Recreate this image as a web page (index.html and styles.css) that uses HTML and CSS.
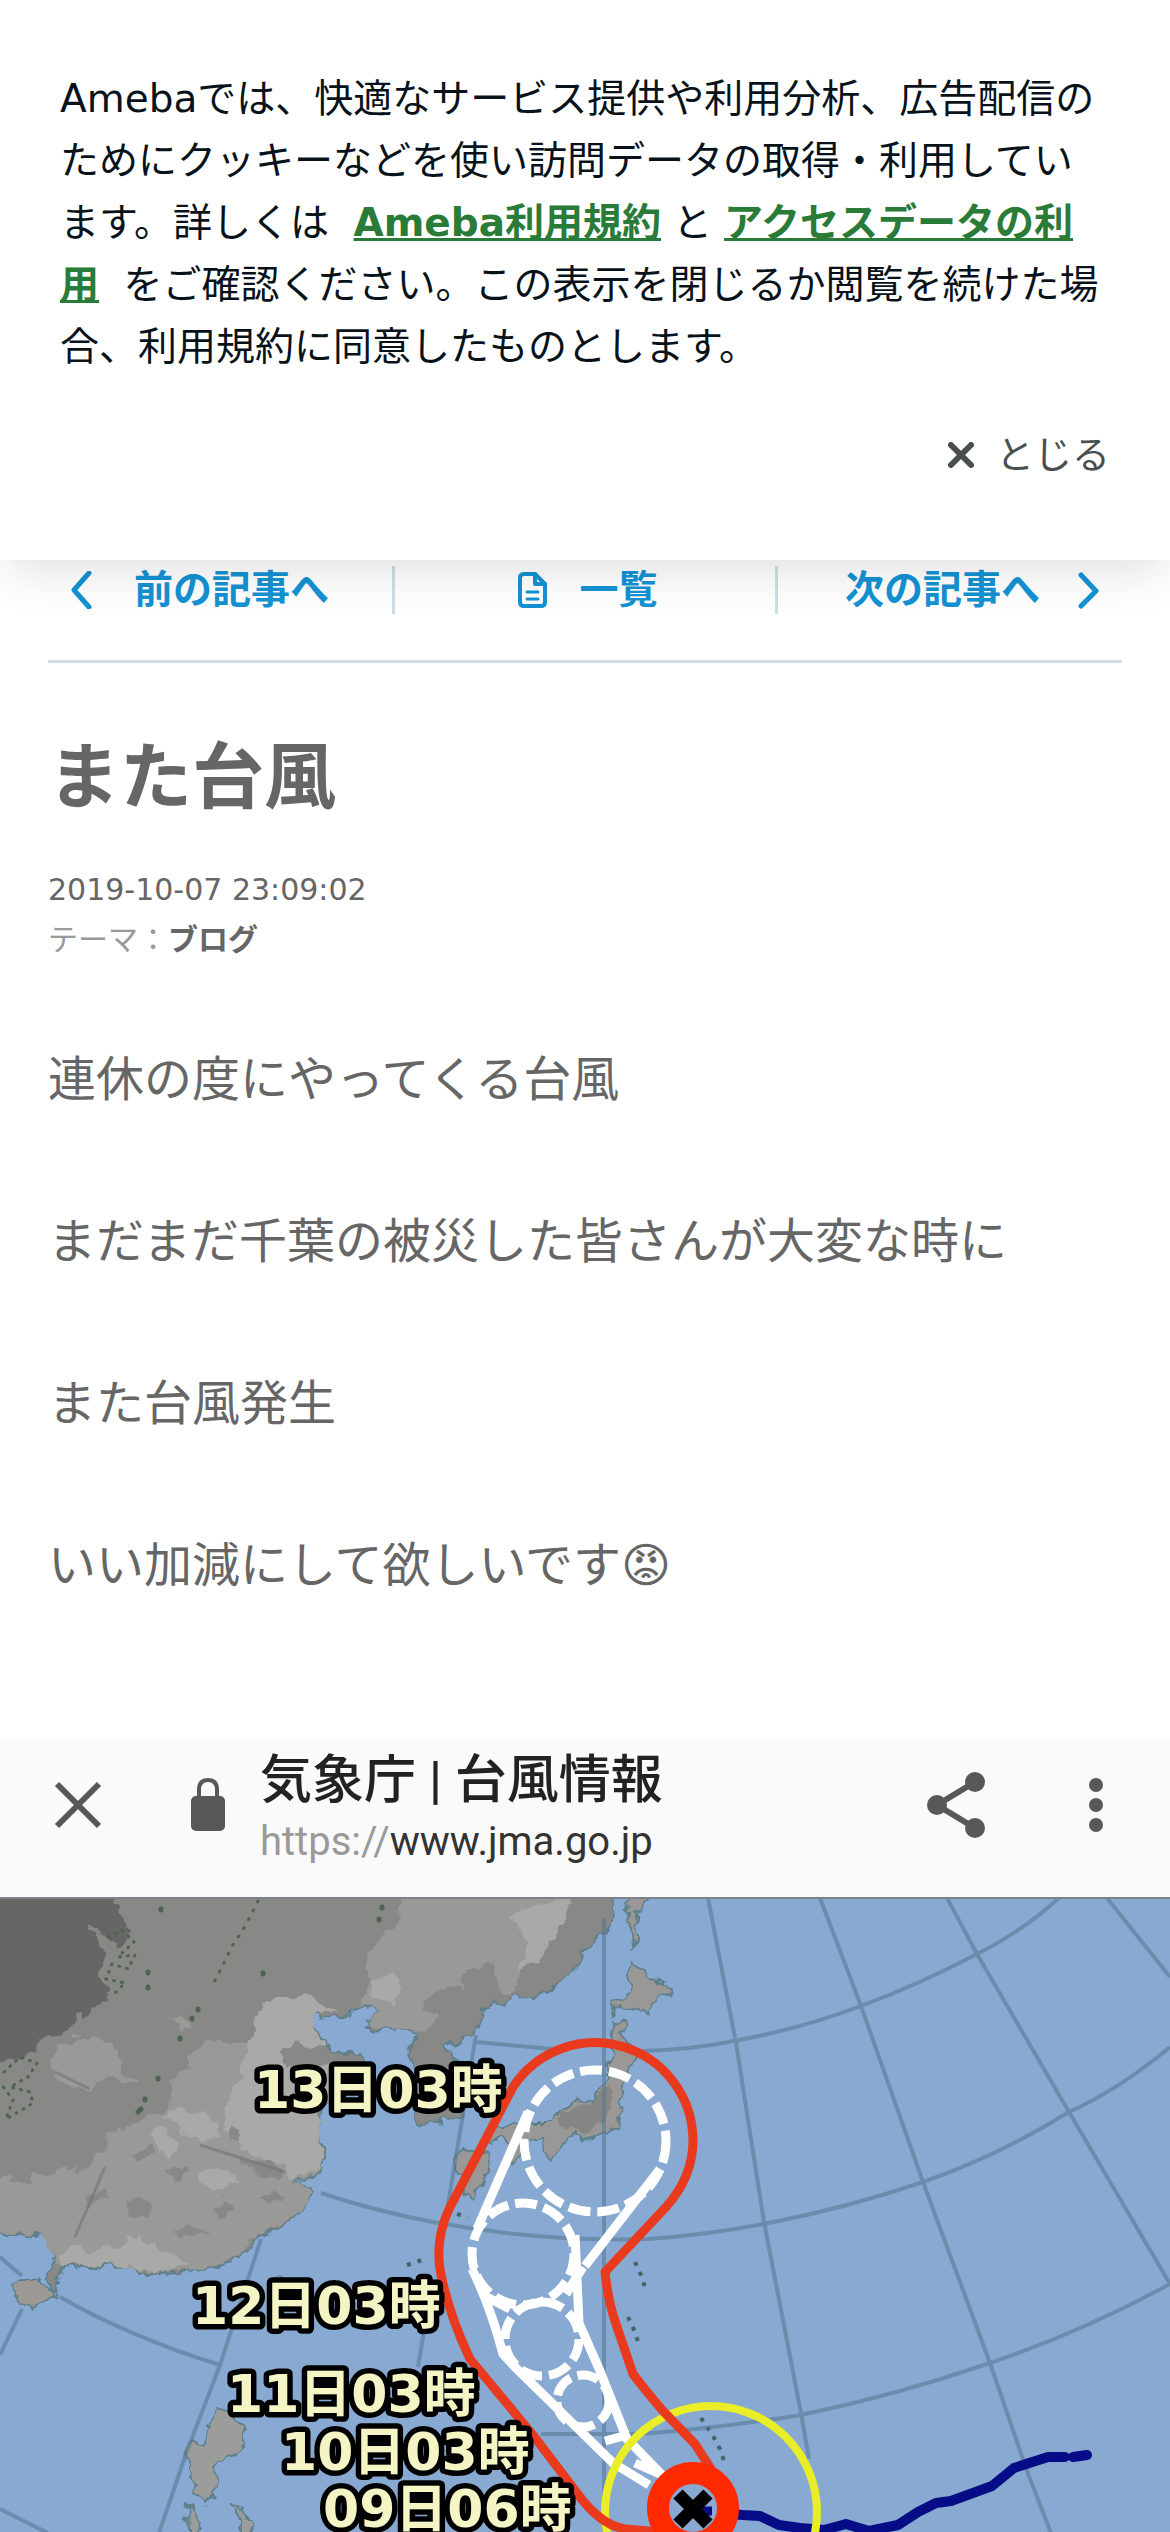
FILE: index.html
```html
<!DOCTYPE html>
<html lang="ja">
<head>
    <meta charset="UTF-8">
    <meta name="viewport" content="width=device-width, initial-scale=1.0">
    <title>また台風</title>
    <link rel="stylesheet" href="styles.css">
</head>
<body>
    <div class="cookie-notice">
        <p>Amebaでは、快適なサービス提供や利用分析、広告配信のためにクッキーなどを使い訪問データの取得・利用しています。詳しくは <a href="#">Ameba利用規約</a>と<a href="#">アクセスデータの利用</a> をご確認ください。この表示を閉じるか閲覧を続けた場合、利用規約に同意したものとします。</p>
        <button type="button" class="close-btn">
            <svg width="26" height="26" viewBox="0 0 26 26"><path d="M3 3 L23 23 M23 3 L3 23" stroke="#494f50" stroke-width="6" stroke-linecap="round"/></svg>
            とじる
        </button>
    </div>

    <nav class="pager">
        <a href="#" class="prev">
            <svg width="22" height="38" viewBox="0 0 22 38" fill="none"><path d="M19 2 L4 19 L19 36" stroke="#1492d3" stroke-width="5" stroke-linecap="round" stroke-linejoin="round"/></svg>
            前の記事へ
        </a>
        <a href="#" class="list">
            <svg width="29" height="36" viewBox="0 0 29 36" fill="none" stroke="#1492d3" stroke-width="4" stroke-linecap="round" stroke-linejoin="round"><path d="M17 2 H6 Q2 2 2 6 V30 Q2 34 6 34 H23 Q27 34 27 30 V12 Z"/><path d="M17 2 V12 H27" /><path d="M9 20 H20 M9 27 H20" stroke-width="3"/></svg>
            一覧
        </a>
        <a href="#" class="next">
            次の記事へ
            <svg width="22" height="38" viewBox="0 0 22 38" fill="none"><path d="M3 4 L18 20 L3 35" stroke="#1492d3" stroke-width="5" stroke-linecap="round" stroke-linejoin="round"/></svg>
        </a>
    </nav>

    <article class="entry">
        <h1>また台風</h1>
        <time datetime="2019-10-07T23:09:02">2019-10-07 23:09:02</time>
        <div class="theme">テーマ：<a href="#">ブログ</a></div>
        <div class="entry-body">
            <p>連休の度にやってくる台風</p>
            <p>まだまだ千葉の被災した皆さんが大変な時に</p>
            <p>また台風発生</p>
            <p>いい加減にして欲しいです😡&#xFE0E;</p>
        </div>
    </article>

    <div class="shot">
        <div class="browser-bar">
            <button type="button" aria-label="閉じる">
                <svg width="48" height="60" viewBox="0 0 48 60"><path d="M3 9 L45 51 M45 9 L3 51" stroke="#585858" stroke-width="6"/></svg>
            </button>
            <svg class="lock" width="36" height="60" viewBox="0 0 36 60"><path d="M9 24 V15 Q9 5 18 5 Q27 5 27 15 V24" fill="none" stroke="#585858" stroke-width="4"/><rect x="1" y="21" width="34" height="35" rx="5" fill="#585858"/></svg>
            <div class="page-info">
                <div class="page-title">気象庁 | 台風情報</div>
                <div class="page-url"><span>https://</span>www.jma.go.jp</div>
            </div>
            <button type="button" class="share" aria-label="共有">
                <svg width="60" height="68" viewBox="0 0 60 68"><path d="M49 11 L11 34 L49 57" fill="none" stroke="#585858" stroke-width="6"/><circle cx="49" cy="11" r="10" fill="#585858"/><circle cx="11" cy="34" r="10" fill="#585858"/><circle cx="49" cy="57" r="10" fill="#585858"/></svg>
            </button>
            <button type="button" aria-label="メニュー">
                <svg width="16" height="56" viewBox="0 0 16 56" fill="#585858"><circle cx="8" cy="8" r="7"/><circle cx="8" cy="28" r="7"/><circle cx="8" cy="48" r="7"/></svg>
            </button>
        </div>
        <svg class="map" viewBox="0 0 1170 636">
            <defs>
                <!-- 海岸線をギザギザにする -->
                <filter id="coast" x="-5%" y="-5%" width="110%" height="110%">
                    <feTurbulence type="fractalNoise" baseFrequency="0.06" numOctaves="3" seed="4" result="noise"/>
                    <feDisplacementMap in="SourceGraphic" in2="noise" scale="18" xChannelSelector="R" yChannelSelector="G"/>
                </filter>
            </defs>
            <rect width="1170" height="636" fill="#88a9d2"/>

            <!-- 陸地 -->
            <g filter="url(#coast)">
                <g stroke="#5f7f8a" stroke-width="2" stroke-linejoin="round" fill="#888886">
                    <path fill="#888886" d="M-20 -20 H620 L611 21 L600 38 L585 55 L575 70 L560 82 L548 95 L534 102 L525 101 L515 94 L505 102 L492 108 L481 117 L476 138 L460 145 L444 148 L453 162 L463 179 L466 205 L461 221 L440 225 L414 229 L412 200 L418 179 L407 163 L414 138 L400 131 L368 130 L377 113 L369 105 L355 114 L336 119 L325 121 L317 113 L312 122 L312 130 L320 138 L325 150 L351 157 L366 167 L340 195 L317 217 L320 240 L328 255 L323 264 L321 277 L295 283 L313 294 L304 306 L299 317 L285 326 L261 337 L255 348 L243 356 L230 364 L216 371 L200 372 L179 379 L160 375 L142 375 L133 366 L123 371 L90 370 L60 369 L56 394 L45 383 L56 358 L50 345 L37 337 L-20 337 Z"/>
                    <path fill="#9c9894" d="M11 390 L22 383 L34 383 L48 390 L58 396 L44 406 L34 412 L20 407 Z"/>
                    <path fill="#9c9c9a" d="M216 512 L226 516 L243 529 L247 545 L232 556 L216 566 L219 580 L215 599 L203 608 L196 590 L188 566 L190 549 L205 545 L208 527 Z"/>
                    <path fill="#9c9c9a" d="M186 610 L198 622 L201 650 H189 Z M231 606 L242 613 L250 624 L253 650 H243 L238 620 Z"/>
                    <path fill="#9c9894" d="M270 384 L278 377 L289 380 L286 394 H270 Z"/>
                </g>
                <path fill="#999997" d="M410 -20 H575 V0 L560 30 L530 50 L515 90 L500 95 L490 66 L470 75 L455 92 L435 95 L420 110 L440 120 L428 136 L370 127 L377 113 L369 105 L358 108 L373 84 L366 67 L380 40 L396 27 Z"/>
                <path fill="#999997" d="M-20 283 L30 285 L30 271 L45 279 L60 275 L76 270 L82 279 L101 254 L110 238 L123 229 L140 220 L164 217 L172 200 L168 183 L190 173 L190 160 L209 142 L240 145 L270 160 L317 217 L325 258 L320 275 L295 283 L311 294 L299 315 L261 335 L243 354 L216 369 L179 376 L142 372 L60 366 L37 335 H-20 Z"/>
                <path fill="#a9a9a7" d="M261 109 L275 101 L299 98 L320 104 L336 115 L317 113 L312 130 L325 150 L300 147 L284 152 L284 170 L366 167 L317 217 L325 258 L320 273 L295 281 L282 265 L250 256 L238 240 L222 230 L226 205 L245 180 L240 160 L255 135 Z"/>
                <path fill="#999997" d="M56 150 L78 139 L100 141 L118 155 L122 172 L137 184 L131 188 L112 179 L98 185 L94 195 L82 192 L60 186 L50 170 Z M163 124 L178 121 L196 126 L180 134 Z"/>
                <path fill="#a9a9a7" d="M164 220 L185 209 L202 217 L218 228 L220 243 L204 246 L186 236 L172 228 Z M152 235 L165 231 L178 243 L174 262 L163 258 Z M196 280 L215 268 L234 273 L240 284 L225 295 L205 291 Z M60 355 L75 350 L120 352 L130 335 L145 345 L170 355 L192 367 L170 374 L110 368 H62 Z M298 233 L315 222 L323 262 L308 273 L296 275 Z M373 84 L396 76 L403 92 L390 107 L375 102 Z M505 20 L540 5 L572 2 L556 38 L535 64 L519 76 L530 40 Z"/>
                <path fill="#888886" d="M228 228 L240 232 L243 245 L234 244 Z M128 305 L145 298 L156 308 L146 321 L130 324 Z M211 310 L225 303 L232 313 L220 325 Z M135 255 L150 247 L158 256 L140 263 Z M240 262 L270 262 L284 273 L276 285 L255 275 Z M87 296 L103 290 L108 300 L94 308 Z M170 333 L195 328 L210 336 L183 343 Z M255 300 L275 295 L286 303 L270 311 Z M165 275 L182 270 L190 278 L172 284 Z"/>
                <path fill="#666665" d="M-20 -20 H112 V0 L122 12 L124 22 L131 38 L118 50 L101 40 L97 28 L90 30 L106 60 L101 78 L108 100 L92 110 L80 120 L75 132 L60 135 L45 142 L37 152 L20 160 L-20 167 Z"/>
                <g fill="#999896" stroke="#5f7f8a" stroke-width="2" stroke-linejoin="round">
                    <path d="M628 -20 H652 V0 L635 15 L636 32 L641 46 L633 50 L631 32 Z"/>
                    <path d="M630 63 L638 74 L648 82 L660 83 L671 88 L669 96 L658 102 L648 117 L639 109 L630 111 L618 110 L611 120 L613 105 L625 98 L627 88 Z"/>
                    <path d="M613 124 L623 122 L620 135 L632 148 L633 165 L627 182 L620 206 L618 230 L609 239 L602 236 L587 243 L573 240 L563 247 L557 256 L550 263 L543 252 L546 240 L533 240 L515 243 L500 243 L490 250 L486 240 L490 231 L523 226 L553 226 L560 213 L576 206 L593 202 L600 190 L607 182 L610 155 L611 138 Z"/>
                    <path d="M459 258 L470 251 L483 257 L489 266 L484 284 L474 304 L467 298 L466 280 L457 274 Z M503 259 L515 250 L526 250 L519 262 L508 268 Z"/>
                </g>
                <path fill="#858583" d="M560 216 L590 206 L606 190 L614 200 L604 225 L586 238 L570 235 L560 226 Z"/>
            </g>
            <g fill="none" stroke="#4c6450" stroke-linecap="round">
                <path d="M108 40 L122 33 L134 45 L118 60 L135 58 L128 72 L112 67 L106 82 L125 86 L113 98" stroke-width="3" stroke-dasharray="1 7"/>
                <path d="M4 175 L20 160 L37 166 L28 180 L10 190 L30 195 L33 206 L20 214 L6 222 L13 203 L2 188" stroke-width="3" stroke-dasharray="1 7"/>
                <path d="M258 4 L250 20 L241 36 L232 49 L224 66 L216 82 L210 90" stroke-width="3" stroke-dasharray="1 9"/>
                <path d="M198 112 V113 M192 121 V122 M180 141 V142 M158 181 V182 M145 202 V203 M138 215 L141 212 M161 12 V13 M148 75 V76 M148 90 V91 M263 76 V77 M382 10 V11 M379 22 V23" stroke-width="5"/>
            </g>
            <g fill="none" stroke="#3f6565" stroke-width="4" stroke-dasharray="4 7">
                <path d="M635 365 L641 378 L645 390 L648 392 M628 420 L635 435 L639 448 M701 521 L713 539 L720 552 L725 567 M407 368 L425 362 M457 317 L468 320"/>
            </g>

            <!-- 緯線・経線 -->
            <g fill="none" stroke="#537790" stroke-width="4" opacity="0.55">
                <path d="M604 21 V636"/>
                <path d="M708 1 L736 146 L764 325 L801 516 L809 562"/>
                <path d="M820 1 L861 109 L923 285 L990 466 L1027 574 L1051 636"/>
                <path d="M947 1 L977 57 L1069 215 L1170 387"/>
                <path d="M1107 1 L1170 80"/>
                <path d="M1059 1 Q1020 36 977 57 Q920 87 861 109 Q800 132 734 144 Q690 153 641 154 M476 145 L552 152"/>
                <path d="M1170 150 Q1120 192 1069 215 Q998 259 923 285 Q847 311 764 327 Q706 338 648 342 Q540 345 433 325 Q375 314 321 296"/>
                <path d="M1170 387 Q1082 435 990 466 Q897 498 801 518 Q720 531 641 537 H541"/>
                <path d="M0 360 L22 379 M60 400 Q130 440 220 468 M0 612 L48 636 M22 412 L0 458"/>
                <path d="M261 342 L220 468 L187 554 L159 636 M476 138 L463 217 L448 308 M428 410 L418 470"/>
            </g>
            <path d="M200 248 L285 275 M105 270 L75 340 M55 175 L90 192" fill="none" stroke="#737a7a" stroke-width="3" opacity="0.7"/>

            <!-- 進路予報 -->
            <path d="M704 614 L742 618 L760 619 L779 628 L800 631 L824 633 L846 627 L869 634 L898 628 L918 615 L936 606 L951 604 L992 589 L1014 571 L1048 560 L1065 560 M1073 560 L1087 558" fill="none" stroke="#050c86" stroke-width="10" stroke-linecap="round" stroke-linejoin="round"/>
            <g fill="none" stroke="#ffffff" stroke-width="9">
                <g stroke-dasharray="22 7">
                    <circle cx="595" cy="244" r="71"/>
                    <circle cx="523" cy="357" r="51"/>
                    <circle cx="542" cy="442" r="37"/>
                    <circle cx="583" cy="504" r="26"/>
                </g>
                <path d="M528 215 L477 332 M472 372 Q490 408 503 457 L515 470 L613 566 L649 588 M660 272 L585 369 M575 338 L579 426 L600 474 L627 542 L662 578 L635 566 M583 370 L566 397 M605 544 L627 538 M487 400 L510 412"/>
            </g>
            <circle cx="711" cy="615" r="106" fill="none" stroke="#e9ee28" stroke-width="8"/>
            <path d="M711 572 L695 547 L663 514 Q645 493 633 477 L617 430 Q608 405 605 375 L666 310 Q693 280 693 243 A98 98 0 0 0 513 190 L449 312 Q434 345 441 378 Q450 420 470 462 L533 538 L577 596 Q600 628 625 632 L660 635" fill="none" stroke="#e93a1e" stroke-width="9" stroke-linejoin="round"/>
            <circle cx="693" cy="611" r="35" fill="#88a9d2" stroke="#ff2a00" stroke-width="22"/>
            <path d="M697 614 H712" stroke="#050c86" stroke-width="9"/>
            <path d="M678 597 L708 627 M708 597 L678 627" stroke="#000" stroke-width="13"/>

            <g class="map-label">
                <text x="254" y="211">13日03時</text>
                <text x="192" y="427">12日03時</text>
                <text x="227" y="515">11日03時</text>
                <text x="281" y="573">10日03時</text>
                <text x="323" y="630">09日06時</text>
            </g>
            <path d="M0 1 H1170" stroke="#7c8288" stroke-width="2"/>
        </svg>
    </div>
</body>
</html>
```
FILE: styles.css
```css
body {
    margin: 0;
    background: #fff;
    color: #666;
    font-family: "DejaVu Sans", "Noto Sans CJK JP", sans-serif;
}
a {
    text-decoration: none;
}
button {
    padding: 0;
    border: none;
    background: none;
    font-family: inherit;
    cursor: pointer;
}
svg {
    display: block;
    flex: none;
}
.cookie-notice {
    position: relative;
    display: flex;
    flex-direction: column;
    padding: 68px 60px 74px;
    background: #fff;
    box-shadow: 0 16px 48px -8px rgba(0, 0, 0, 0.14);
}
.cookie-notice p {
    margin: 0;
    color: #08121a;
    font-size: 39px;
    line-height: 62px;
}
.cookie-notice p a {
    margin: 0 12px;
    color: #2a7b37;
    font-weight: bold;
    text-decoration: underline;
}
.close-btn {
    display: flex;
    align-items: center;
    align-self: flex-end;
    gap: 22px;
    margin-top: 46px;
    color: #494f50;
    font-size: 38px;
    line-height: 62px;
}
.pager {
    display: flex;
    margin: 6px 48px 0;
    padding-bottom: 46px;
    border-bottom: 3px solid #d3dde8;
}
.pager a {
    display: flex;
    flex: 1 1 0;
    align-items: center;
    justify-content: center;
    height: 48px;
    color: #1492d3;
    font-size: 39px;
    font-weight: bold;
    line-height: 48px;
}
.pager .prev {
    justify-content: flex-start;
    gap: 42px;
    padding-left: 22px;
}
.pager .list {
    flex: 0 0 36%;
    box-sizing: border-box;
    gap: 32px;
    padding-left: 6px;
    border-left: 3px solid #cddfe6;
    border-right: 3px solid #cddfe6;
}
.pager .next {
    justify-content: flex-end;
    gap: 38px;
    padding-right: 22px;
}
.entry {
    padding: 60px 48px 50px;
}
.entry h1 {
    margin: 0;
    font-size: 72px;
    line-height: 108px;
}
.entry time {
    display: block;
    margin-top: 34px;
    font-size: 30px;
    line-height: 50px;
}
.theme {
    color: #999;
    font-size: 30px;
    line-height: 50px;
}
.theme a {
    color: #666;
    font-weight: bold;
}
.entry-body {
    padding-top: 74px;
}
.entry-body p {
    margin: 0 0 81px;
    font-size: 48px;
    line-height: 81px;
}
.browser-bar {
    display: flex;
    align-items: center;
    height: 136px;
    padding: 0 66px 24px 54px;
    background: #fafafa;
}
.lock {
    margin-left: 88px;
}
.page-info {
    flex: 1;
    margin-left: 34px;
    padding-top: 10px;
    font-family: Roboto, "Noto Sans CJK JP", sans-serif;
}
.page-title {
    color: #222;
    font-size: 52px;
    font-weight: 500;
    line-height: 64px;
}
.page-url {
    color: #333;
    font-size: 40px;
    line-height: 58px;
}
.page-url span {
    color: #999;
}
.share {
    margin-right: 102px;
}
.map {
    width: 100%;
    height: auto;
}
.map-label {
    fill: #f4f4c4;
    stroke: #000;
    stroke-width: 11px;
    stroke-linejoin: round;
    paint-order: stroke;
    font-size: 52px;
    font-weight: bold;
}
```
